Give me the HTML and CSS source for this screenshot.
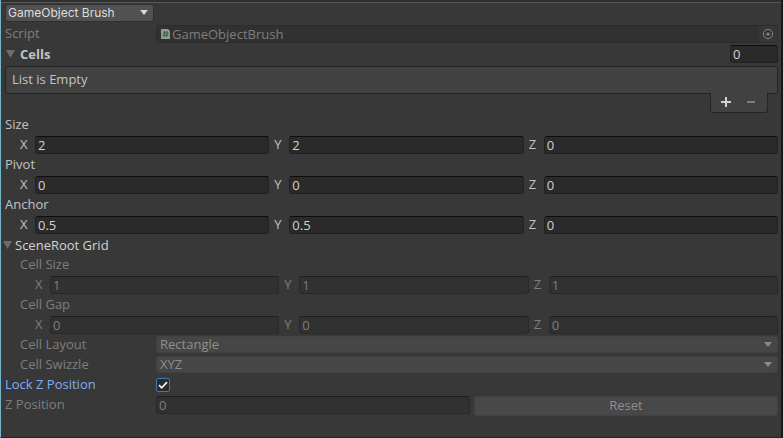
FILE: index.html
```html
<!DOCTYPE html>
<html lang="en">
<head>
<meta charset="utf-8">
<title>GameObject Brush</title>
<link rel="stylesheet" href="styles.css">
</head>
<body>
<main class="panel">
  <div class="row toolbar">
    <span class="select brush"><select aria-label="Brush"><option>GameObject Brush</option></select></span>
  </div>
  <div class="row property disabled">
    <span class="label">Script</span>
    <div class="object-field">
      <svg class="script-icon" viewBox="0 0 9 10" aria-hidden="true"><path fill="#979797" d="M0 0h7l2 2v8H0z"/><path fill="none" stroke="#2f6b3c" d="M3.7 2 3 8M6.2 2 5.5 8M2 4h5.5M1.7 6.2h5.5"/></svg>
      <span class="object-name">GameObjectBrush</span>
      <button class="picker" type="button" aria-label="Select script" disabled><svg viewBox="0 0 12 12"><circle cx="6" cy="6" r="4.6" fill="none" stroke="#848484"/><circle cx="6" cy="6" r="1.6" fill="#848484"/></svg></button>
    </div>
  </div>
  <div class="row list-head">
    <button class="foldout bold" type="button">Cells</button>
    <input class="field count" type="text" value="0" aria-label="Cell count">
  </div>
  <section class="list">
    <div class="list-body">List is Empty</div>
    <div class="list-footer">
      <button type="button" aria-label="Add"><svg viewBox="0 0 10 10"><path fill="#d0d0d0" d="M4 0h2v4h4v2H6v4H4V6H0V4h4z"/></svg></button>
      <button type="button" aria-label="Remove" disabled><svg viewBox="0 0 10 10"><path fill="#7e7e7e" d="M1 4h8v2H1z"/></svg></button>
    </div>
  </section>
  <div class="row">Size</div>
  <div class="row vector">
    <label>X<input class="field" type="text" value="2"></label>
    <label>Y<input class="field" type="text" value="2"></label>
    <label>Z<input class="field" type="text" value="0"></label>
  </div>
  <div class="row">Pivot</div>
  <div class="row vector">
    <label>X<input class="field" type="text" value="0"></label>
    <label>Y<input class="field" type="text" value="0"></label>
    <label>Z<input class="field" type="text" value="0"></label>
  </div>
  <div class="row">Anchor</div>
  <div class="row vector">
    <label>X<input class="field" type="text" value="0.5"></label>
    <label>Y<input class="field" type="text" value="0.5"></label>
    <label>Z<input class="field" type="text" value="0"></label>
  </div>
  <div class="row">
    <button class="foldout outdent" type="button">SceneRoot Grid</button>
  </div>
  <div class="row nested disabled">Cell Size</div>
  <div class="row nested vector disabled">
    <label>X<input class="field" type="text" value="1" disabled></label>
    <label>Y<input class="field" type="text" value="1" disabled></label>
    <label>Z<input class="field" type="text" value="1" disabled></label>
  </div>
  <div class="row nested disabled">Cell Gap</div>
  <div class="row nested vector disabled">
    <label>X<input class="field" type="text" value="0" disabled></label>
    <label>Y<input class="field" type="text" value="0" disabled></label>
    <label>Z<input class="field" type="text" value="0" disabled></label>
  </div>
  <div class="row property disabled">
    <label class="label inset" for="layout">Cell Layout</label>
    <span class="select"><select id="layout" disabled><option>Rectangle</option></select></span>
  </div>
  <div class="row property disabled">
    <label class="label inset" for="swizzle">Cell Swizzle</label>
    <span class="select"><select id="swizzle" disabled><option>XYZ</option></select></span>
  </div>
  <div class="row property focused">
    <label class="label" for="lock">Lock Z Position</label>
    <span class="check"><input id="lock" type="checkbox" checked><svg viewBox="0 0 14 14" aria-hidden="true"><path fill="none" stroke="#f0f0f0" stroke-width="1.8" d="M3 7.2 5.7 9.8 11 4.2"/></svg></span>
  </div>
  <div class="row property disabled">
    <label class="label" for="zpos">Z Position</label>
    <div class="pair">
      <input class="field" id="zpos" type="text" value="0" disabled>
      <button class="reset" type="button" disabled>Reset</button>
    </div>
  </div>
</main>
</body>
</html>
```
FILE: styles.css
```css
* {
  box-sizing: border-box;
}

body {
  margin: 0;
  background: #383838;
  color: #c4c4c4;
  font: 13px/16px "Open Sans", "Noto Sans", sans-serif;
}

input,
select,
button {
  margin: 0;
  color: inherit;
  font: inherit;
}

button {
  padding: 0;
  border: 0;
  background: none;
}

.panel {
  display: flex;
  flex-direction: column;
  gap: 2px;
  min-height: 100vh;
  padding: 1px 3px 0 4px;
  border-left: 1px solid #78b4c8;
  border-right: 2px solid #191919;
  border-bottom: 1px solid #282228;
  box-shadow: inset 0 2px #303030, inset 0 3px #585858;
}

.row {
  display: flex;
  align-items: flex-start;
  height: 18px;
}

.toolbar {
  height: 22px;
  padding-top: 3px;
}

.disabled {
  color: #7e7e7e;
}

.property {
  display: grid;
  grid-template-columns: 151px 1fr;
}

.inset,
.nested {
  padding-left: 15px;
}

.field {
  flex: 1;
  min-width: 0;
  height: 18px;
  padding: 0 2px;
  border: 1px solid #212121;
  border-top-color: #0d0d0d;
  border-radius: 3px;
  outline: 0;
  background: #2a2a2a;
  color: #d2d2d2;
}

.field:disabled {
  border-color: #292929;
  border-top-color: #1e1e1e;
  background: #313131;
  color: #7e7e7e;
}

.vector {
  display: grid;
  grid-template-columns: repeat(3, minmax(0, 1fr));
  gap: 5px;
  padding-left: 15px;
}

.vector.nested {
  padding-left: 30px;
}

.vector label {
  display: grid;
  grid-template-columns: 15px 1fr;
}

.select {
  position: relative;
  display: block;
  height: 17px;
}

.select::after {
  content: "";
  position: absolute;
  top: 6px;
  right: 6px;
  width: 8px;
  height: 5px;
  background: #8a8a8a;
  clip-path: polygon(0 0, 100% 0, 50% 100%);
  pointer-events: none;
}

.select select {
  display: block;
  width: 100%;
  height: 100%;
  padding: 0 20px 0 3px;
  border: 1px solid #424242;
  border-radius: 3px;
  appearance: none;
  background: #464646;
  color: #8e8e8e;
  line-height: 15px;
  opacity: 1;
}

.brush {
  width: 149px;
  height: 18px;
}

.brush::after {
  background: #d8d8d8;
}

.brush select {
  padding-left: 2px;
  border-color: #303030;
  background: #515151;
  color: #dedede;
  font: 12px/16px Inter, sans-serif;
}

.object-field {
  display: flex;
  align-items: center;
  height: 18px;
  padding-left: 4px;
  border: 1px solid #2c2c2c;
  border-radius: 3px;
  background: #313131;
}

.script-icon {
  width: 9px;
  height: 10px;
  margin-right: 2px;
}

.object-name {
  flex: 1;
}

.picker {
  display: grid;
  place-items: center;
  width: 18px;
  height: 16px;
  background: #363636;
}

.picker svg {
  width: 12px;
  height: 12px;
}

.list-head {
  justify-content: space-between;
}

.count {
  flex: none;
  width: 48px;
}

.foldout {
  display: flex;
  align-items: center;
  gap: 5px;
  height: 18px;
}

.foldout::before {
  content: "";
  width: 9px;
  height: 8px;
  margin-left: 1px;
  background: #6c6c6c;
  clip-path: polygon(0 0, 100% 0, 50% 100%);
}

.foldout.outdent {
  gap: 3px;
  margin-left: -3px;
  color: #d2d2d2;
}

.bold {
  font-weight: 700;
}

.list {
  margin-top: 1px;
}

.list-body {
  height: 28px;
  padding: 4px 6px;
  border: 1px solid #242424;
  border-radius: 3px;
  background: #414141;
}

.list-footer {
  position: relative;
  display: flex;
  width: 58px;
  height: 20px;
  margin: -1px 10px 1px auto;
  padding: 0 4px 1px 2px;
  border: 1px solid #242424;
  border-top: 0;
  border-radius: 0 0 3px 3px;
  background: #414141;
}

.list-footer button {
  display: grid;
  flex: 1;
  place-items: center;
}

.list-footer svg {
  width: 10px;
  height: 10px;
}

.focused {
  color: #7fadf5;
}

.check {
  position: relative;
  display: block;
  width: 14px;
  height: 14px;
  margin-top: 2px;
}

.check input {
  display: block;
  width: 14px;
  height: 14px;
  border: 1px solid #3a79bb;
  border-radius: 2px;
  appearance: none;
  background: #2a2a2a;
}

.check svg {
  position: absolute;
  inset: 0;
  pointer-events: none;
}

.pair {
  display: grid;
  grid-template-columns: 314fr 304fr;
  align-items: start;
  gap: 4px;
  height: 18px;
}

.reset {
  height: 20px;
  padding-bottom: 2px;
  border: 1px solid #424242;
  border-radius: 3px;
  background: #484848;
  color: #8e8e8e;
}
```
